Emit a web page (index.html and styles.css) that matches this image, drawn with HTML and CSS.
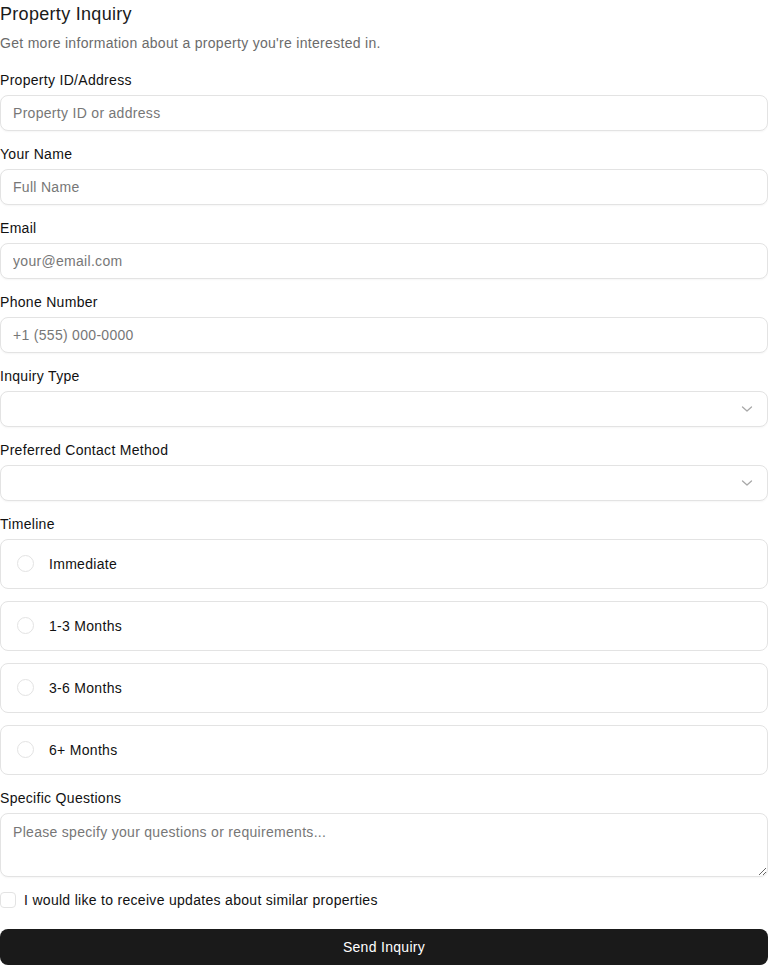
FILE: index.html
```html
<!DOCTYPE html>
<html lang="en">
<head>
<meta charset="utf-8">
<title>Property Inquiry</title>
<link rel="stylesheet" href="styles.css">
</head>
<body>
<form class="form">
  <h3 class="title">Property Inquiry</h3>
  <p class="subtitle">Get more information about a property you're interested in.</p>

  <div class="field">
    <label class="label">Property ID/Address</label>
    <input class="input" type="text" placeholder="Property ID or address">
  </div>
  <div class="field">
    <label class="label">Your Name</label>
    <input class="input" type="text" placeholder="Full Name">
  </div>
  <div class="field">
    <label class="label">Email</label>
    <input class="input" type="email" placeholder="your@email.com">
  </div>
  <div class="field">
    <label class="label">Phone Number</label>
    <input class="input" type="tel" placeholder="+1 (555) 000-0000">
  </div>
  <div class="field">
    <label class="label">Inquiry Type</label>
    <div class="select">
      <svg class="chevron" width="12" height="8" viewBox="0 0 12 8"><path d="M1.5 2 L6 6 L10.5 2" fill="none" stroke="#a8a8a8" stroke-width="1.3" stroke-linecap="round" stroke-linejoin="round"/></svg>
    </div>
  </div>
  <div class="field">
    <label class="label">Preferred Contact Method</label>
    <div class="select">
      <svg class="chevron" width="12" height="8" viewBox="0 0 12 8"><path d="M1.5 2 L6 6 L10.5 2" fill="none" stroke="#a8a8a8" stroke-width="1.3" stroke-linecap="round" stroke-linejoin="round"/></svg>
    </div>
  </div>
  <div class="field">
    <label class="label">Timeline</label>
    <div class="options">
      <div class="option"><span class="radio"></span><span>Immediate</span></div>
      <div class="option"><span class="radio"></span><span>1-3 Months</span></div>
      <div class="option"><span class="radio"></span><span>3-6 Months</span></div>
      <div class="option"><span class="radio"></span><span>6+ Months</span></div>
    </div>
  </div>
  <div class="field">
    <label class="label">Specific Questions</label>
    <textarea class="textarea" placeholder="Please specify your questions or requirements..."></textarea>
  </div>
  <div class="check-row">
    <span class="checkbox"></span>
    <span>I would like to receive updates about similar properties</span>
  </div>
  <button class="button" type="button">Send Inquiry</button>
</form>
</body>
</html>
```

FILE: styles.css
```css
* { box-sizing: border-box; }
html, body { margin: 0; padding: 0; background: #fff; }
body {
  font-family: Arial, "Liberation Sans", Helvetica, sans-serif;
  font-size: 14px;
  letter-spacing: 0.3px;
  color: #111;
}
.form { display: flex; flex-direction: column; width: 768px; }
.title {
  margin: 0;
  font-size: 18px;
  font-weight: normal;
  line-height: 28px;
  color: #1a1a1a;
}
.subtitle {
  margin: 1px 0 0;
  line-height: 28px;
  color: #6b6b6b;
}
.field { display: flex; flex-direction: column; margin-top: 13px; }
.label { line-height: 20px; margin-bottom: 5px; color: #111; }
.input, .select, .textarea {
  width: 100%;
  height: 36px;
  border: 1px solid #e3e3e3;
  border-radius: 8px;
  padding: 0 12px;
  font: inherit;
  font-size: 14px;
  letter-spacing: 0.3px;
  color: #111;
  background: #fff;
  box-shadow: 0 1px 2px rgba(0,0,0,0.04);
  outline: none;
}
.input::placeholder, .textarea::placeholder { color: #777; }
.select { display: flex; align-items: center; justify-content: flex-end; padding-right: 14px; }
.chevron { display: block; }
.options { display: flex; flex-direction: column; gap: 12px; }
.option {
  height: 50px;
  border: 1px solid #e3e3e3;
  border-radius: 8px;
  display: flex;
  align-items: center;
  padding-left: 16px;
  gap: 15px;
  color: #111;
  padding-bottom: 1px;
}
.radio {
  width: 17px;
  height: 17px;
  border: 1px solid #e3e3e3;
  border-radius: 50%;
  flex: none;
}
.textarea {
  height: 64px;
  padding: 8px 12px;
  line-height: 20px;
  resize: vertical;
  display: block;
}
.check-row {
  display: flex;
  align-items: center;
  gap: 8px;
  margin-top: 14px;
  line-height: 18px;
  color: #111;
}
.checkbox {
  width: 16px;
  height: 16px;
  border: 1px solid #e3e3e3;
  border-radius: 4px;
  flex: none;
}
.button {
  margin-top: 20px;
  height: 36px;
  width: 100%;
  border: none;
  border-radius: 8px;
  background: #1a1a1a;
  color: #fff;
  font: inherit;
  font-size: 14px;
  letter-spacing: 0.3px;
}
```
